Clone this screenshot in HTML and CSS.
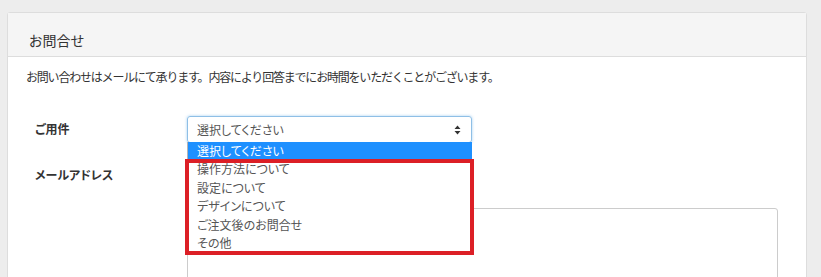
FILE: index.html
```html
<!DOCTYPE html>
<html>
  <head>
    <meta name="viewport" content="width=device-width,initial-scale=1.0">
    <title>お問合せ</title>
    <link rel="stylesheet" href="styles.css">
  </head>
  <body>
    <div class="panel">
      <div class="panel-heading">お問合せ</div>
      <div class="panel-body">
        <p class="intro">お問い合わせはメールにて承ります。内容により回答までにお時間をいただくことがございます。</p>

        <div class="form-row">
          <label class="form-label">ご用件</label>
          <div class="form-field">
            <div class="select-box">
              <span>選択してください</span>
              <svg class="select-arrow" width="7" height="10" viewBox="0 0 7 10">
                <path d="M3.5 0.5 L6.5 4 L0.5 4 Z M3.5 9.5 L6.5 6 L0.5 6 Z" fill="#333"/>
              </svg>
            </div>
            <ul class="select-list">
              <li class="selected">選択してください</li>
              <li>操作方法について</li>
              <li>設定について</li>
              <li>デザインについて</li>
              <li>ご注文後のお問合せ</li>
              <li>その他</li>
            </ul>
            <div class="mark"></div>
          </div>
        </div>

        <div class="form-row">
          <label class="form-label">メールアドレス</label>
          <div class="form-field">
            <div class="text-input"></div>
          </div>
        </div>

        <div class="form-row">
          <label class="form-label"></label>
          <div class="form-field wide">
            <div class="text-area"></div>
          </div>
        </div>
      </div>
    </div>
  </body>
</html>
```

FILE: styles.css
```css
body {
  margin: 0;
  padding: 12px 14px 0 7px;
  background: #ededed;
  color: #333;
  font-family: "Noto Sans CJK JP", "Noto Sans", sans-serif;
  font-feature-settings: "palt";
  font-size: 12px;
  overflow: hidden;
  height: 277px;
  box-sizing: border-box;
}

.panel {
  background: #fff;
  border: 1px solid #dddddd;
  border-radius: 3px;
  height: 300px;
}

.panel-heading {
  background: #f5f5f5;
  border-bottom: 1px solid #dddddd;
  padding: 17px 21px 6px;
  font-size: 14px;
  line-height: 20px;
  color: #333;
}

.panel-body {
  padding: 11px 28px 0 18px;
}

.intro {
  margin: 0 0 30px;
  line-height: 18px;
  font-feature-settings: normal;
  letter-spacing: -1.2px;
  color: #333;
}

.form-row {
  display: flex;
  margin-bottom: 19px;
  padding-left: 9px;
}

.form-label {
  width: 152px;
  flex-shrink: 0;
  font-weight: bold;
  line-height: 26px;
  color: #333;
}

.form-field {
  position: relative;
  width: 285px;
}

.form-field.wide {
  width: auto;
  flex: 1;
}

.select-box {
  height: 27px;
  box-sizing: border-box;
  border: 1px solid #8fbfe6;
  border-radius: 3px;
  box-shadow: 0 0 3px rgba(102, 175, 233, 0.6);
  display: flex;
  align-items: center;
  justify-content: space-between;
  padding: 0 10px 0 9px;
  color: #555;
}

.select-list {
  position: absolute;
  top: 26px;
  left: 0;
  right: 0;
  margin: 0;
  padding: 0;
  list-style: none;
  background: #fff;
  border-left: 1px solid #b5b5b5;
  z-index: 2;
}

.select-list li {
  height: 18.4px;
  line-height: 18.4px;
  padding-left: 9px;
  color: #555;
}

.select-list li.selected {
  background: #1e90ff;
  color: #fff;
}

.mark {
  position: absolute;
  left: -2px;
  top: 43px;
  width: 281px;
  height: 88px;
  border: 4px solid #dc1f26;
  z-index: 3;
}

.text-input {
  height: 27px;
  box-sizing: border-box;
  border: 1px solid #ccc;
  border-radius: 3px;
}

.text-area {
  height: 120px;
  border: 1px solid #ccc;
  border-radius: 3px;
}
```
